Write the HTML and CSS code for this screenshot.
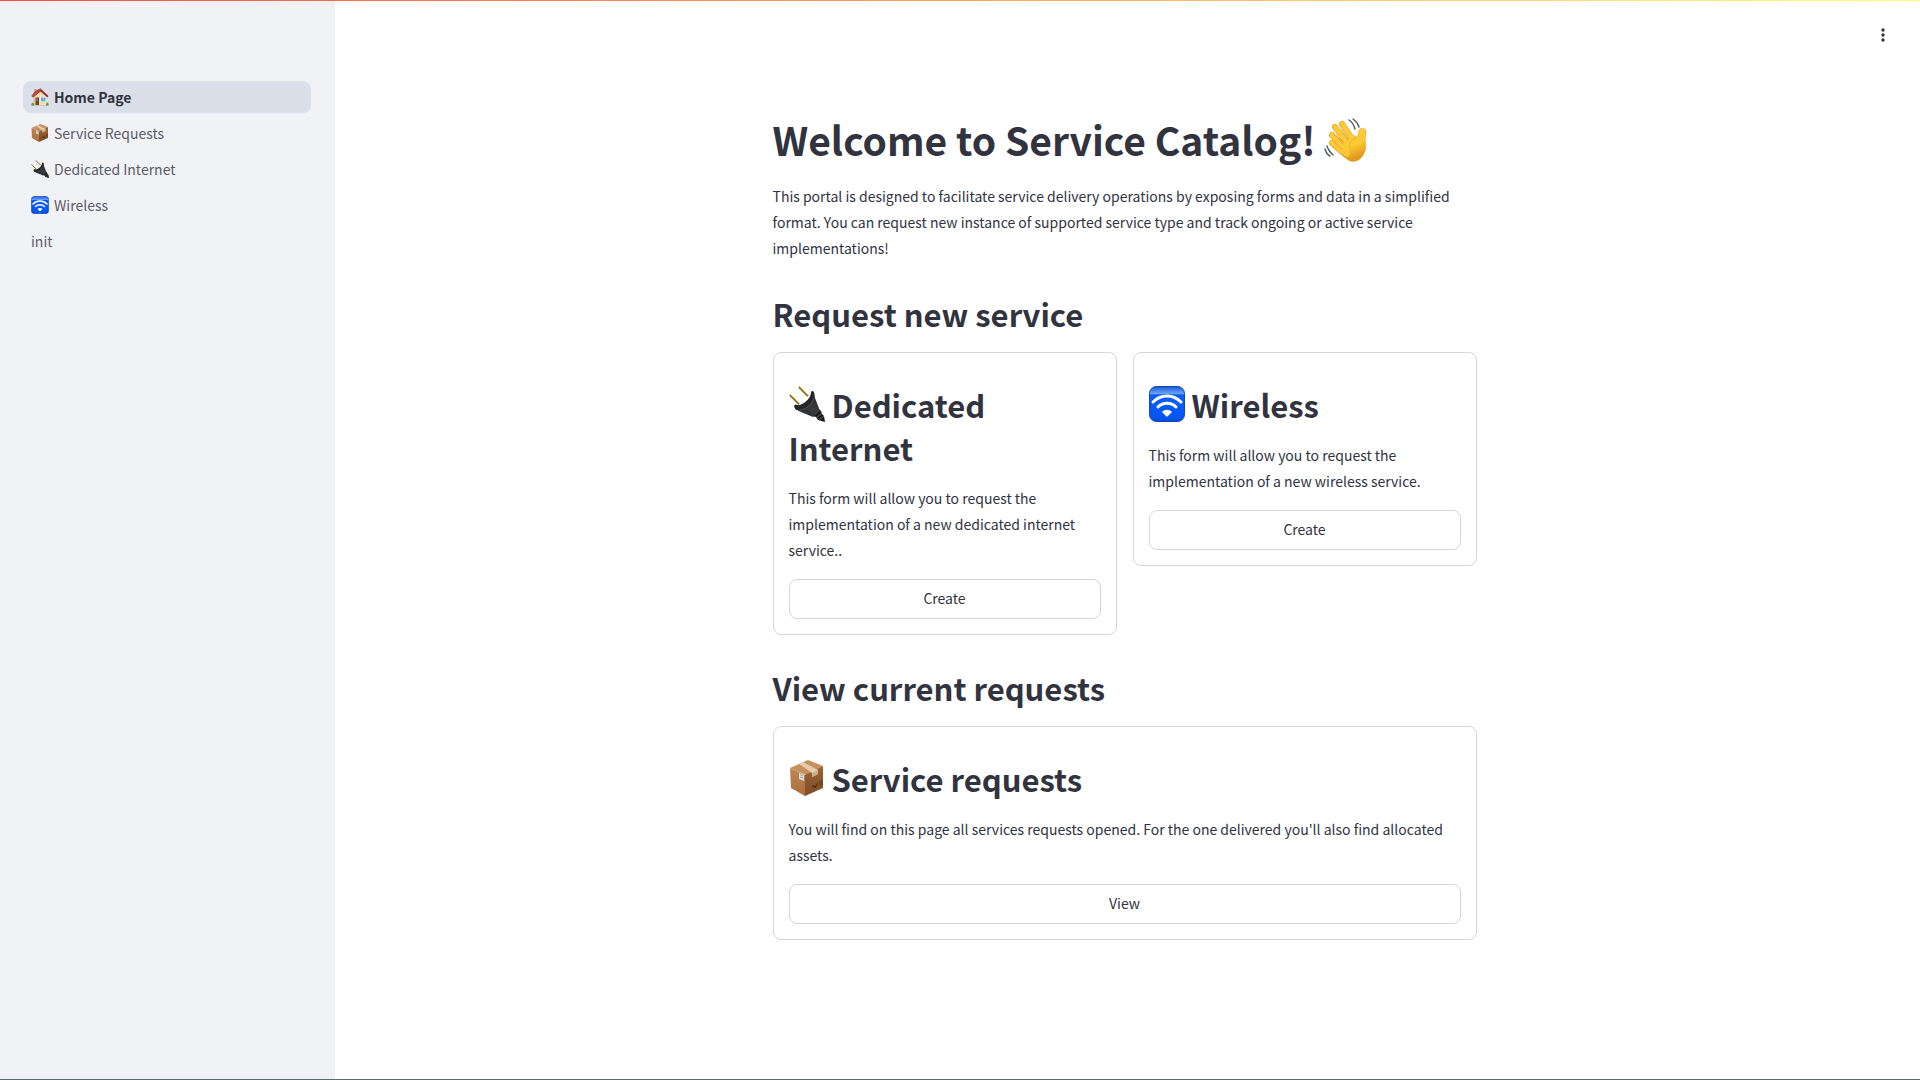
FILE: index.html
```
<!DOCTYPE html>
<html lang="en">
<head>
  <meta charset="UTF-8">
  <title>Home Page</title>
  <link rel="stylesheet" href="styles.css">
</head>
<body>

  <!-- shared icons -->
  <svg class="sprite" aria-hidden="true">
    <defs>
      <linearGradient id="wifiFill" x1="0" y1="0" x2="0" y2="1">
        <stop offset="0" stop-color="#1c50bb"/>
        <stop offset="0.06" stop-color="#2e70e6"/>
        <stop offset="0.2" stop-color="#6aa0f5"/>
        <stop offset="0.24" stop-color="#0a5df5"/>
        <stop offset="0.9" stop-color="#0455f5"/>
        <stop offset="1" stop-color="#0848cb"/>
      </linearGradient>
      <linearGradient id="handFill" x1="0" y1="0" x2="0.4" y2="1">
        <stop offset="0" stop-color="#ffd04a"/>
        <stop offset="0.65" stop-color="#fdc830"/>
        <stop offset="1" stop-color="#e09a20"/>
      </linearGradient>
      <linearGradient id="plugFill" x1="0" y1="1" x2="1" y2="0">
        <stop offset="0" stop-color="#202122"/>
        <stop offset="0.55" stop-color="#3a3c3d"/>
        <stop offset="1" stop-color="#151617"/>
      </linearGradient>
      <linearGradient id="boxLeft" x1="0" y1="0" x2="0" y2="1">
        <stop offset="0" stop-color="#c08651"/>
        <stop offset="1" stop-color="#a86d3b"/>
      </linearGradient>
      <linearGradient id="boxRight" x1="0" y1="0" x2="0" y2="1">
        <stop offset="0" stop-color="#9b6435"/>
        <stop offset="1" stop-color="#7d4d26"/>
      </linearGradient>
    </defs>

    <symbol id="house" viewBox="0 0 36 36">
      <path d="M1 32h34v3H1z" fill="#b7b391"/>
      <path d="M6 2h5v9H6z" fill="#c9a98a"/>
      <path d="M5 15 19 4l13 12v18H5z" fill="#f3dfb5"/>
      <path d="M5 16h3v18H5z" fill="#dcc190"/>
      <path d="M19 1 35 16l-2 3L19 7 4 19l-3-3 8-10z" fill="#9c2f30"/>
      <path d="M19 1 9 6 1 16l3 2L19 5z" fill="#bf4741"/>
      <path d="M9 19h7v15H9z" fill="#7a3e27"/>
      <path d="M11 21h3v5h-3z" fill="#5f8aa5"/>
      <path d="M19 18h11v10H19z" fill="#fff"/>
      <path d="M20 19h9v8h-9z" fill="#55a3d9"/>
      <path d="M24.500 19v8" stroke="#d5efff"/>
      <path d="M1 34c0-5 3-6 5-2v3H1zM30 34c0-5 4-7 5-2v3h-5z" fill="#5b9b31"/>
    </symbol>

    <symbol id="package" viewBox="0 0 36 36">
      <path d="M1 8 19 0l15 6-17 9z" fill="#c78f5b"/>
      <path d="M1 8l15 7v21L2 28z" fill="url(#boxLeft)"/>
      <path d="M16 15 34 6v22l-18 8z" fill="url(#boxRight)"/>
      <path d="M10 4l4-2 15 8v4l-6 3v-4z" fill="#e2cbae"/>
      <path d="M23 13l6-3v4l-6 3z" fill="#c9ad8c"/>
      <path d="M10 13l5 2v6l-5-2z" fill="#d9e0e4"/>
      <path d="M11 15l3 1M11 17l3 1" stroke="#a3a9ad"/>
      <path d="M23 25l3 1 3-4-2 6-4-1z" fill="#4f2f17"/>
      <path d="M31 21v5M33 20v5" stroke="#5c371c"/>
    </symbol>

    <symbol id="plug" viewBox="0 0 36 36">
      <path d="M1 9l9 9M10 1l9 9" stroke="#846920" stroke-width="2"/>
      <path d="M1 8l9 9M10 0l9 9" stroke="#dfbd54" stroke-width="1"/>
      <path d="M25 23l4-1 3 3 1 3 2 2 1 6-7-2-2-3-4-1-2-4z" fill="#191a1a"/>
      <path d="M25 29l5-5M27 32l6-5M30 34l5-4" stroke="#666" stroke-width="1"/>
      <path d="M6 21c-1-2 0-3 2-2 6 1 14-7 14-12 0-2 1-3 3-1l1 6 5 13-7 6-12-5-6-3z" fill="url(#plugFill)"/>
      <path d="M6 19c7 3 17-7 17-14l2 2c1 8-8 18-17 17-2-1-4-4-2-5z" fill="#242627"/>
      <path d="M11 24c7-1 12-6 14-12" fill="none" stroke="#525556"/>
    </symbol>

    <symbol id="wifi" viewBox="0 0 36 36">
      <rect x="0.5" y="0.5" width="35" height="35" rx="7" fill="url(#wifiFill)" stroke="#0c49b7"/>
      <g fill="none" stroke="#fff" stroke-width="3" stroke-linecap="round">
        <path d="M4 16C12 8 24 8 32 16"/>
        <path d="M9 21c5-5 13-5 18 0"/>
      </g>
      <path d="M13 26c3-3 7-3 10 0l-4 4q-1 1-2 0z" fill="#fff"/>
    </symbol>

    <symbol id="wave" viewBox="0 0 44 44">
      <g fill="none" stroke="#555961" stroke-width="1.4" stroke-linecap="round">
        <path d="M25 2c3 2 5 5 6 9M29 1c3 2 5 5 6 8"/>
        <path d="M3 28c1 4 3 6 6 9M1 31c1 4 3 6 5 7"/>
      </g>
      <g stroke="#dc991e" stroke-width="6" stroke-linecap="round">
        <path d="M18 6l10 15M11 9l13 17M8 17l14 14M8 25l14 12"/>
      </g>
      <path d="M16 28 28 17l5 2c2-1 0-5 3-8 3-2 6 0 6 3l-1 9c2 6 0 13-5 18-4 3-9 3-12 1L10 30z" fill="url(#handFill)" stroke="#dfa02a" stroke-width="0.6"/>
      <g stroke="#fdc938" stroke-width="5" stroke-linecap="round">
        <path d="M18 6l11 16M11 9l14 18M8 17l15 15M8 25l15 11"/>
      </g>
      <path d="M17 12l7 10M12 18l7 8M11 25l7 6" stroke="#dba02a" stroke-width="0.8" stroke-linecap="round"/>
      <path d="M32 20c-5 2-7 5-6 10" fill="none" stroke="#eeb12a" stroke-linecap="round"/>
    </symbol>
  </svg>

  <div class="app">
    <aside class="sidebar">
      <nav class="nav">
        <a href="#" class="nav-link active"><svg class="emoji"><use href="#house"/></svg>Home Page</a>
        <a href="#" class="nav-link"><svg class="emoji"><use href="#package"/></svg>Service Requests</a>
        <a href="#" class="nav-link"><svg class="emoji"><use href="#plug"/></svg>Dedicated Internet</a>
        <a href="#" class="nav-link"><svg class="emoji"><use href="#wifi"/></svg>Wireless</a>
        <a href="#" class="nav-link">init</a>
      </nav>
    </aside>

    <main class="main">
      <header class="toolbar">
        <button class="menu-button" aria-label="Main menu">
          <svg width="24" height="24" viewBox="0 0 24 24" fill="#31333f">
            <circle cx="12" cy="7" r="1.700"/>
            <circle cx="12" cy="12" r="1.700"/>
            <circle cx="12" cy="17" r="1.700"/>
          </svg>
        </button>
      </header>

      <div class="content">
        <h1>Welcome to Service Catalog! <svg class="emoji"><use href="#wave"/></svg></h1>
        <p>This portal is designed to facilitate service delivery operations by exposing forms and data in a simplified format. You can request new instance of supported service type and track ongoing or active service implementations!</p>

        <h2>Request new service</h2>
        <div class="columns">
          <section class="card">
            <h2><svg class="emoji"><use href="#plug"/></svg>Dedicated Internet</h2>
            <p>This form will allow you to request the implementation of a new dedicated internet service..</p>
            <button class="button">Create</button>
          </section>
          <section class="card">
            <h2><svg class="emoji"><use href="#wifi"/></svg>Wireless</h2>
            <p>This form will allow you to request the implementation of a new wireless service.</p>
            <button class="button">Create</button>
          </section>
        </div>

        <h2 class="next-section">View current requests</h2>
        <section class="card">
          <h2><svg class="emoji"><use href="#package"/></svg>Service requests</h2>
          <p>You will find on this page all services requests opened. For the one delivered you'll also find allocated assets.</p>
          <button class="button">View</button>
        </section>
      </div>
    </main>
  </div>

</body>
</html>
```

FILE: styles.css
```
* {
  box-sizing: border-box;
}
body {
  margin: 0;
  font-family: "Noto Sans CJK SC", "Noto Sans", sans-serif;
  font-size: 14px;
  line-height: 26px;
  color: #31333f;
  background: #fff;
}
.sprite {
  position: absolute;
  width: 0;
  height: 0;
}
.app {
  display: flex;
  min-height: 100vh;
  border-bottom: 1px solid #5f686c;
}
.app::before {
  content: "";
  position: absolute;
  top: 0;
  left: 0;
  right: 0;
  height: 1px;
  background: linear-gradient(90deg, #ff4b4b, #fffd80);
}

/* sidebar */
.sidebar {
  width: 335px;
  flex-shrink: 0;
  padding: 81px 24px 24px 23px;
  background: #f0f2f6;
}
.nav {
  display: flex;
  flex-direction: column;
  gap: 4px;
}
.nav-link {
  display: flex;
  align-items: center;
  gap: 5px;
  height: 32px;
  padding: 0 8px;
  border-radius: 8px;
  color: #5b5d68;
  text-decoration: none;
}
.nav-link.active {
  background: #dadfe9;
  color: #31333f;
  font-weight: 600;
}
.emoji {
  width: 18px;
  height: 18px;
}

/* main area */
.main {
  flex: 1;
  padding-right: 6px;
}
.toolbar {
  display: flex;
  justify-content: flex-end;
  padding: 19px 15px 0;
}
.menu-button {
  display: flex;
  padding: 4px;
  border: none;
  background: none;
  cursor: pointer;
}
.content {
  max-width: 736px;
  margin: 0 auto;
  padding: 62px 16px 80px;
}
h1, h2, p {
  margin: 0;
}
h1 {
  font-size: 39px;
  line-height: 53px;
  font-weight: 700;
  padding-bottom: 17px;
}
h2 {
  font-size: 31px;
  line-height: 43px;
  font-weight: 600;
  padding: 15px 0 17px;
}
p {
  margin-bottom: 16px;
}
h1 .emoji {
  width: 44px;
  height: 44px;
  vertical-align: -6px;
}
h2 .emoji {
  width: 36px;
  height: 36px;
  margin-right: 7px;
  vertical-align: -4px;
}
.columns {
  display: grid;
  grid-template-columns: 1fr 1fr;
  align-items: start;
  gap: 16px;
}
.card {
  padding: 15px;
  border: 1px solid #d6d6d8;
  border-radius: 8px;
}
.card h2 {
  padding-bottom: 16px;
}
.next-section {
  margin-top: 16px;
}
.button {
  display: block;
  width: 100%;
  height: 40px;
  padding: 0 12px 2px;
  border: 1px solid #d6d6d8;
  border-radius: 8px;
  background: #fff;
  color: inherit;
  font: inherit;
  cursor: pointer;
}
```
